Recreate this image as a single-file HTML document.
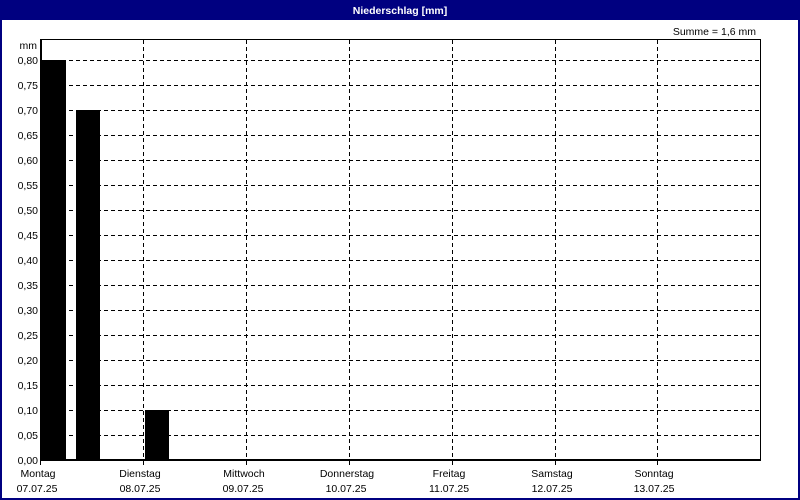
<!DOCTYPE html>
<html><head><meta charset="utf-8"><style>
html,body{margin:0;padding:0;background:#fff;}
svg{display:block;}
text{font-family:"Liberation Sans",sans-serif;font-size:10.5px;fill:#000;}
</style></head><body>
<svg width="800" height="500" xmlns="http://www.w3.org/2000/svg">
<rect x="0" y="0" width="800" height="500" fill="#fff"/>
<rect x="0" y="0" width="800" height="20" fill="#000080"/>
<rect x="0" y="0" width="2" height="500" fill="#000080"/>
<rect x="798" y="0" width="2" height="500" fill="#000080"/>
<rect x="0" y="498" width="800" height="2" fill="#000080"/>
<text x="400" y="14" text-anchor="middle" style="fill:#fff;font-weight:bold;font-size:10.5px">Niederschlag [mm]</text>
<text x="756" y="35" text-anchor="end">Summe = 1,6 mm</text>
<g stroke="#000" stroke-width="1" stroke-dasharray="4,3" shape-rendering="crispEdges">
<line x1="41" x2="760" y1="60.5" y2="60.5"/><line x1="41" x2="760" y1="85.5" y2="85.5"/>
<line x1="41" x2="760" y1="110.5" y2="110.5"/><line x1="41" x2="760" y1="135.5" y2="135.5"/>
<line x1="41" x2="760" y1="160.5" y2="160.5"/><line x1="41" x2="760" y1="185.5" y2="185.5"/>
<line x1="41" x2="760" y1="210.5" y2="210.5"/><line x1="41" x2="760" y1="235.5" y2="235.5"/>
<line x1="41" x2="760" y1="260.5" y2="260.5"/><line x1="41" x2="760" y1="285.5" y2="285.5"/>
<line x1="41" x2="760" y1="310.5" y2="310.5"/><line x1="41" x2="760" y1="335.5" y2="335.5"/>
<line x1="41" x2="760" y1="360.5" y2="360.5"/><line x1="41" x2="760" y1="385.5" y2="385.5"/>
<line x1="41" x2="760" y1="410.5" y2="410.5"/><line x1="41" x2="760" y1="435.5" y2="435.5"/>
<line x1="143.5" x2="143.5" y1="40" y2="460"/><line x1="246.5" x2="246.5" y1="40" y2="460"/>
<line x1="349.5" x2="349.5" y1="40" y2="460"/><line x1="452.5" x2="452.5" y1="40" y2="460"/>
<line x1="555.5" x2="555.5" y1="40" y2="460"/><line x1="657.5" x2="657.5" y1="40" y2="460"/>
</g>
<rect x="40.5" y="39.5" width="720" height="421" fill="none" stroke="#000" stroke-width="1" shape-rendering="crispEdges"/>
<rect x="40" y="459" width="721" height="2" fill="#000"/>
<rect x="40" y="40" width="2" height="421" fill="#000"/>
<g fill="#000">
<rect x="42" y="60" width="24" height="400"/>
<rect x="76" y="110" width="24" height="350"/>
<rect x="145" y="410" width="24" height="50"/>
<rect x="143" y="461" width="1" height="4"/><rect x="246" y="461" width="1" height="4"/>
<rect x="349" y="461" width="1" height="4"/><rect x="452" y="461" width="1" height="4"/>
<rect x="555" y="461" width="1" height="4"/><rect x="657" y="461" width="1" height="4"/>
<rect x="40" y="461" width="1" height="4"/>
</g>
<g text-anchor="end">
<text x="37" y="49">mm</text>
<text x="38" y="64">0,80</text><text x="38" y="89">0,75</text><text x="38" y="114">0,70</text>
<text x="38" y="139">0,65</text><text x="38" y="164">0,60</text><text x="38" y="189">0,55</text>
<text x="38" y="214">0,50</text><text x="38" y="239">0,45</text><text x="38" y="264">0,40</text>
<text x="38" y="289">0,35</text><text x="38" y="314">0,30</text><text x="38" y="339">0,25</text>
<text x="38" y="364">0,20</text><text x="38" y="389">0,15</text><text x="38" y="414">0,10</text>
<text x="38" y="439">0,05</text><text x="38" y="464">0,00</text>
</g>
<g text-anchor="middle">
<text x="38" y="477">Montag</text><text x="37" y="492">07.07.25</text>
<text x="140" y="477">Dienstag</text><text x="140" y="492">08.07.25</text>
<text x="244" y="477">Mittwoch</text><text x="243" y="492">09.07.25</text>
<text x="347" y="477">Donnerstag</text><text x="346" y="492">10.07.25</text>
<text x="449" y="477">Freitag</text><text x="449" y="492">11.07.25</text>
<text x="552" y="477">Samstag</text><text x="552" y="492">12.07.25</text>
<text x="654" y="477">Sonntag</text><text x="654" y="492">13.07.25</text>
</g>
</svg>
</body></html>
